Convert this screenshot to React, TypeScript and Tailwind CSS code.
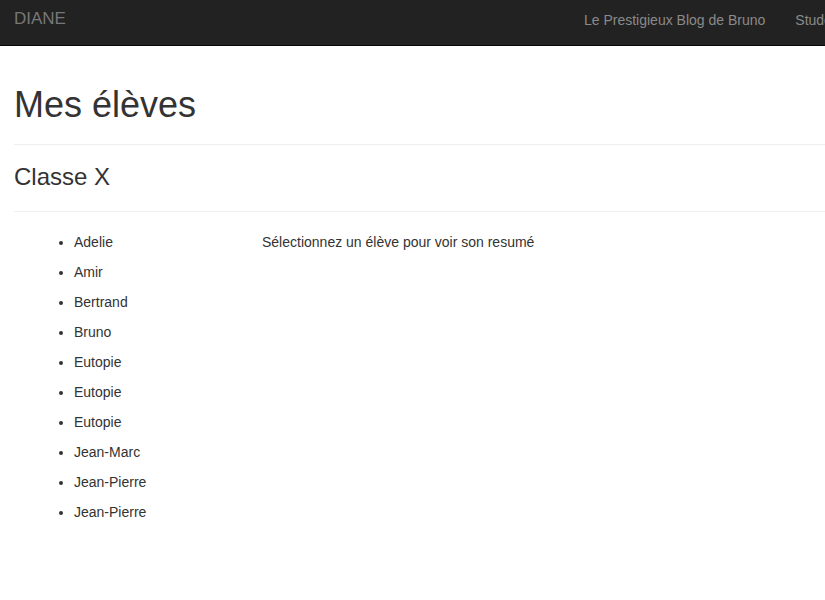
export default function App() {
  const eleves = [
    'Adelie',
    'Amir',
    'Bertrand',
    'Bruno',
    'Eutopie',
    'Eutopie',
    'Eutopie',
    'Jean-Marc',
    'Jean-Pierre',
    'Jean-Pierre',
  ];

  return (
    <div className="min-h-screen bg-white text-[#333] font-['Liberation_Sans',Arial,sans-serif] overflow-hidden">
      <nav className="h-[46px] bg-[#222] border-b border-[#080808] flex items-start whitespace-nowrap overflow-hidden">
        <a className="pl-[14px] pt-[9px] text-[17px] leading-[20px] text-[#777] shrink-0">DIANE</a>
        <div className="ml-[518px] flex gap-[30px] pt-[10px] text-[14px] leading-[20px] text-[#8a8a8a] shrink-0">
          <a>Le Prestigieux Blog de Bruno</a>
          <a>Students</a>
        </div>
      </nav>

      <div className="pl-[14px]">
        <div className="mt-[39px] pb-[19px] border-b border-[#eee]">
          <h1 className="text-[36px] leading-[40px]">Mes élèves</h1>
        </div>
        <div className="pt-[18px] pb-[21px] border-b border-[#eee]">
          <h3 className="text-[24px] leading-[27px]">Classe X</h3>
        </div>

        <div className="flex pt-[15px]">
          <ul className="w-[248px] list-disc pl-[60px] text-[14px]">
            {eleves.map((e, i) => (
              <li key={i} className="leading-[30px]">
                {e}
              </li>
            ))}
          </ul>
          <p className="text-[14px] leading-[30px]">Sélectionnez un élève pour voir son resumé</p>
        </div>
      </div>
    </div>
  );
}
